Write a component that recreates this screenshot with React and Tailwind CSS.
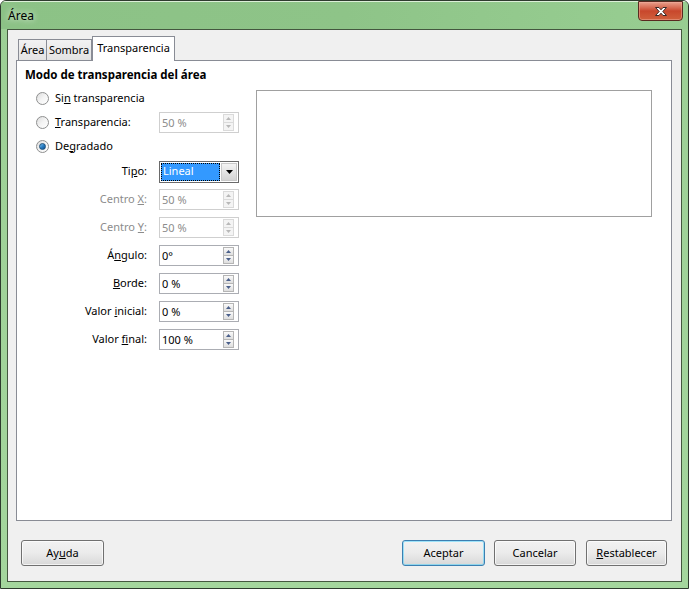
import React from 'react';

const font = { fontFamily: '"Noto Sans", "Liberation Sans", sans-serif' };

function Radio({ checked }) {
  return (
    <span className="flex h-[13px] w-[13px] items-center justify-center rounded-full border border-[#8e8f8f] bg-gradient-to-br from-[#dcdcdc] via-[#f4f4f4] to-[#ffffff]">
      {checked && (
        <span className="h-[7px] w-[7px] rounded-full border border-[#1b4f7a] bg-gradient-to-br from-[#79c2f0] via-[#2a7fc4] to-[#0d4f8f]" />
      )}
    </span>
  );
}

function Arrow({ up, color }) {
  return (
    <svg width="5" height="3" viewBox="0 0 5 3">
      <path d={up ? 'M0 3 L2.5 0 L5 3 Z' : 'M0 0 L5 0 L2.5 3 Z'} fill={color} />
    </svg>
  );
}

function Spin({ value, disabled }) {
  const arrow = disabled ? '#b8b8b8' : '#4a5f8a';
  const half = disabled
    ? 'border-[#dadada] bg-[#f4f4f4]'
    : 'border-[#b5b5b5] bg-gradient-to-b from-[#fafafa] to-[#dedede]';
  return (
    <div
      className={`flex h-[21px] w-[80px] items-center border bg-white ${
        disabled ? 'border-[#cfcfcf] text-[#8c8c8c]' : 'border-[#abadb3] text-black'
      }`}
    >
      <span className="flex-1 pl-[2px] leading-none">{value}</span>
      <div className="mr-[4px] flex h-[17px] w-[11px] flex-col">
        <span className={`flex flex-1 items-center justify-center border ${half}`}>
          <Arrow up color={arrow} />
        </span>
        <span className={`-mt-px flex flex-1 items-center justify-center border ${half}`}>
          <Arrow color={arrow} />
        </span>
      </div>
    </div>
  );
}

function Field({ label, children, disabled }) {
  return (
    <div className="flex h-[28px] items-center">
      <span className={`w-[122px] text-right ${disabled ? 'text-[#8c8c8c]' : 'text-black'}`}>{label}</span>
      <div className="ml-auto">{children}</div>
    </div>
  );
}

function Btn({ children, primary, className = '' }) {
  return (
    <button
      className={`h-[26px] rounded-[3px] border bg-gradient-to-b from-[#f2f2f2] via-[#ebebeb] to-[#d8d8d8] text-black ${
        primary ? 'border-[#3c7fb1] shadow-[inset_0_0_0_1px_#48d1ff80]' : 'border-[#707070] shadow-[inset_0_0_0_1px_#ffffffb0]'
      } ${className}`}
    >
      {children}
    </button>
  );
}

export default function App() {
  return (
    <div className="text-[11px] text-black" style={font}>
      <div className="flex h-[589px] w-[689px] flex-col overflow-hidden rounded-t-[6px] border border-[#2e3b2e] bg-gradient-to-b from-[#9ccf95] to-[#a4d69d]">
        {/* title bar */}
        <div className="relative flex h-[28px] items-center border-t border-[#dcefd8] bg-gradient-to-r from-[#8cc286] via-[#8ec488] to-[#98ce92] pl-[7px]">
          <span className="text-[12px] [text-shadow:0_0_6px_#ffffff]">Área</span>
          <div className="absolute right-[5px] top-[-1px] flex h-[20px] w-[45px] items-center justify-center rounded-b-[4px] border border-[#5a2a20] bg-gradient-to-b from-[#e8a08d] via-[#c8472c] to-[#d0603c] shadow-[inset_0_0_0_1px_#f0b0a080]">
            <svg width="14" height="11" viewBox="0 0 14 11">
              <path
                d="M1.5 1.5 L5 1.5 L7 3.8 L9 1.5 L12.5 1.5 L8.8 5.5 L12.5 9.5 L9 9.5 L7 7.2 L5 9.5 L1.5 9.5 L5.2 5.5 Z"
                fill="#ffffff"
                stroke="#3b2a26"
                strokeWidth="1"
                strokeLinejoin="round"
              />
            </svg>
          </div>
        </div>

        {/* client area */}
        <div className="mx-[6px] mb-[6px] flex h-[553px] flex-col border border-[#44573f] bg-[#f0f0f0] pl-[8px] pr-[9px] pt-[7px]">
          {/* tabs */}
          <div className="relative z-10 flex h-[23px] items-end pl-[2px]">
            <div className="flex h-[21px] w-[29px] items-center justify-center border border-b-0 border-[#898c95] bg-gradient-to-b from-[#f2f2f2] to-[#e3e3e3]">
              Área
            </div>
            <div className="flex h-[21px] w-[45px] items-center justify-center border border-b-0 border-l-0 border-[#898c95] bg-gradient-to-b from-[#f2f2f2] to-[#e3e3e3]">
              Sombra
            </div>
            <div className="-mb-px flex h-[25px] w-[83px] items-center justify-center border border-b-0 border-[#898c95] bg-white pb-[2px]">
              Transparencia
            </div>
          </div>

          {/* panel */}
          <div className="h-[461px] w-[656px] border border-[#898c95] bg-white pl-[8px] pt-[6px]">
            <div className="flex h-[16px] items-center text-[11.5px] font-bold">Modo de transparencia del área</div>
            <div className="mt-[3px] flex">
              <div className="w-[214px]">
                <div className="flex h-[24px] items-center pl-[11px]">
                  <Radio />
                  <span className="ml-[6px]">
                    Si<u>n</u> transparencia
                  </span>
                </div>
                <div className="flex h-[24px] items-center pl-[11px]">
                  <Radio />
                  <span className="ml-[6px]">
                    <u>T</u>ransparencia:
                  </span>
                  <div className="ml-auto">
                    <Spin value="50 %" disabled />
                  </div>
                </div>
                <div className="flex h-[24px] items-center pl-[11px]">
                  <Radio checked />
                  <span className="ml-[6px]">
                    De<u>g</u>radado
                  </span>
                </div>
                <div className="flex h-[27px] items-center">
                  <span className="w-[122px] text-right">
                    Ti<u>p</u>o:
                  </span>
                  <div className="ml-auto flex h-[22px] w-[80px] items-center border border-[#6a6a6a] bg-white p-[1px]">
                    <div className="flex h-full flex-1 items-center border border-dotted border-black bg-[#3399ff] pl-[1px] text-white">
                      Lineal
                    </div>
                    <div className="ml-[1px] flex h-full w-[16px] items-center justify-center border border-[#c9c9c9] bg-gradient-to-b from-[#f4f4f4] to-[#d4d4d4]">
                      <svg width="7" height="4" viewBox="0 0 7 4">
                        <path d="M0 0 L7 0 L3.5 4 Z" fill="#000000" />
                      </svg>
                    </div>
                  </div>
                </div>
                <Field
                  disabled
                  label={
                    <>
                      Centro <u>X</u>:
                    </>
                  }
                >
                  <Spin value="50 %" disabled />
                </Field>
                <Field
                  disabled
                  label={
                    <>
                      Centro <u>Y</u>:
                    </>
                  }
                >
                  <Spin value="50 %" disabled />
                </Field>
                <Field
                  label={
                    <>
                      Á<u>n</u>gulo:
                    </>
                  }
                >
                  <Spin value="0°" />
                </Field>
                <Field
                  label={
                    <>
                      <u>B</u>orde:
                    </>
                  }
                >
                  <Spin value="0 %" />
                </Field>
                <Field
                  label={
                    <>
                      Valor <u>i</u>nicial:
                    </>
                  }
                >
                  <Spin value="0 %" />
                </Field>
                <Field
                  label={
                    <>
                      Valor <u>f</u>inal:
                    </>
                  }
                >
                  <Spin value="100 %" />
                </Field>
              </div>
              <div className="ml-[17px] mt-[4px] h-[127px] w-[396px] border border-[#a0a0a0] bg-white" />
            </div>
          </div>

          {/* buttons */}
          <div className="mt-[19px] flex pl-[5px] pr-[5px]">
            <Btn className="w-[83px]">
              Ay<u>u</u>da
            </Btn>
            <Btn primary className="ml-auto w-[83px]">
              Aceptar
            </Btn>
            <Btn className="ml-[9px] w-[82px]">Cancelar</Btn>
            <Btn className="ml-[10px] w-[81px]">
              <u>R</u>establecer
            </Btn>
          </div>
        </div>
      </div>
    </div>
  );
}
